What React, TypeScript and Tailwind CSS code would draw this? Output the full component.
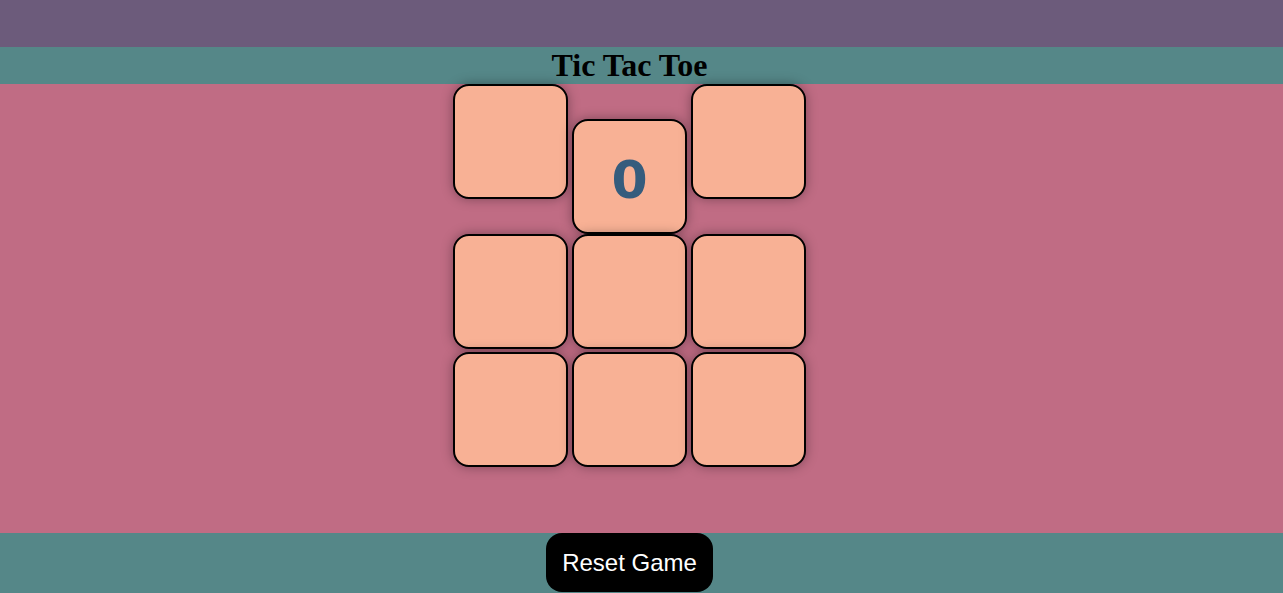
import { useState } from "react";

type Cell = "" | "X" | "0";

function Square({ value, onClick, className }: { value: Cell; onClick: () => void; className?: string }) {
    return (
        <button
            onClick={onClick}
            className={`w-[115px] h-[115px] shrink-0 rounded-2xl border-2 border-black bg-[#f8b195] shadow-[0_0_12px_rgba(0,0,0,0.35)] flex items-center justify-center text-[52px] font-bold text-[#355c7d] ${className ?? ""}`}
            style={{ fontFamily: '"DejaVu Sans", sans-serif' }}
        >
            <span className="inline-block translate-y-[3px]">{value}</span>
        </button>
    );
}

export default function App() {
    const [board, setBoard] = useState<Cell[]>(["", "0", "", "", "", "", "", "", ""]);

    const play = (i: number) => {
        if (board[i]) return;
        const next = [...board];
        next[i] = board.filter(Boolean).length % 2 === 0 ? "X" : "0";
        setBoard(next);
    };

    return (
        <div className="w-full min-h-[593px] bg-[#6c5b7b]">
            <div className="h-[47px]" />
            <div className="bg-[#558788]">
                <h1
                    className="w-[1259px] text-center text-[32px] font-bold leading-[37px] text-black"
                    style={{ fontFamily: '"Liberation Serif", serif' }}
                >
                    Tic Tac Toe
                </h1>
            </div>

            <div className="bg-[#c06c84] pb-[66px]">
                <div className="w-[1259px] flex flex-col items-center">
                    <div className="flex items-start gap-1">
                        <Square value={board[0]} onClick={() => play(0)} />
                        <Square value={board[1]} onClick={() => play(1)} className="mt-[35px]" />
                        <Square value={board[2]} onClick={() => play(2)} />
                    </div>
                    <div className="flex gap-1">
                        <Square value={board[3]} onClick={() => play(3)} />
                        <Square value={board[4]} onClick={() => play(4)} />
                        <Square value={board[5]} onClick={() => play(5)} />
                    </div>
                    <div className="flex gap-1 mt-[3px]">
                        <Square value={board[6]} onClick={() => play(6)} />
                        <Square value={board[7]} onClick={() => play(7)} />
                        <Square value={board[8]} onClick={() => play(8)} />
                    </div>
                </div>
            </div>

            <div className="bg-[#558788] h-[60px]">
                <div className="w-[1259px] flex justify-center">
                    <button
                        onClick={() => setBoard(["", "", "", "", "", "", "", "", ""])}
                        className="h-[59px] px-4 rounded-2xl bg-black text-white text-2xl"
                        style={{ fontFamily: '"Liberation Sans", sans-serif' }}
                    >
                        Reset Game
                    </button>
                </div>
            </div>
        </div>
    );
}
